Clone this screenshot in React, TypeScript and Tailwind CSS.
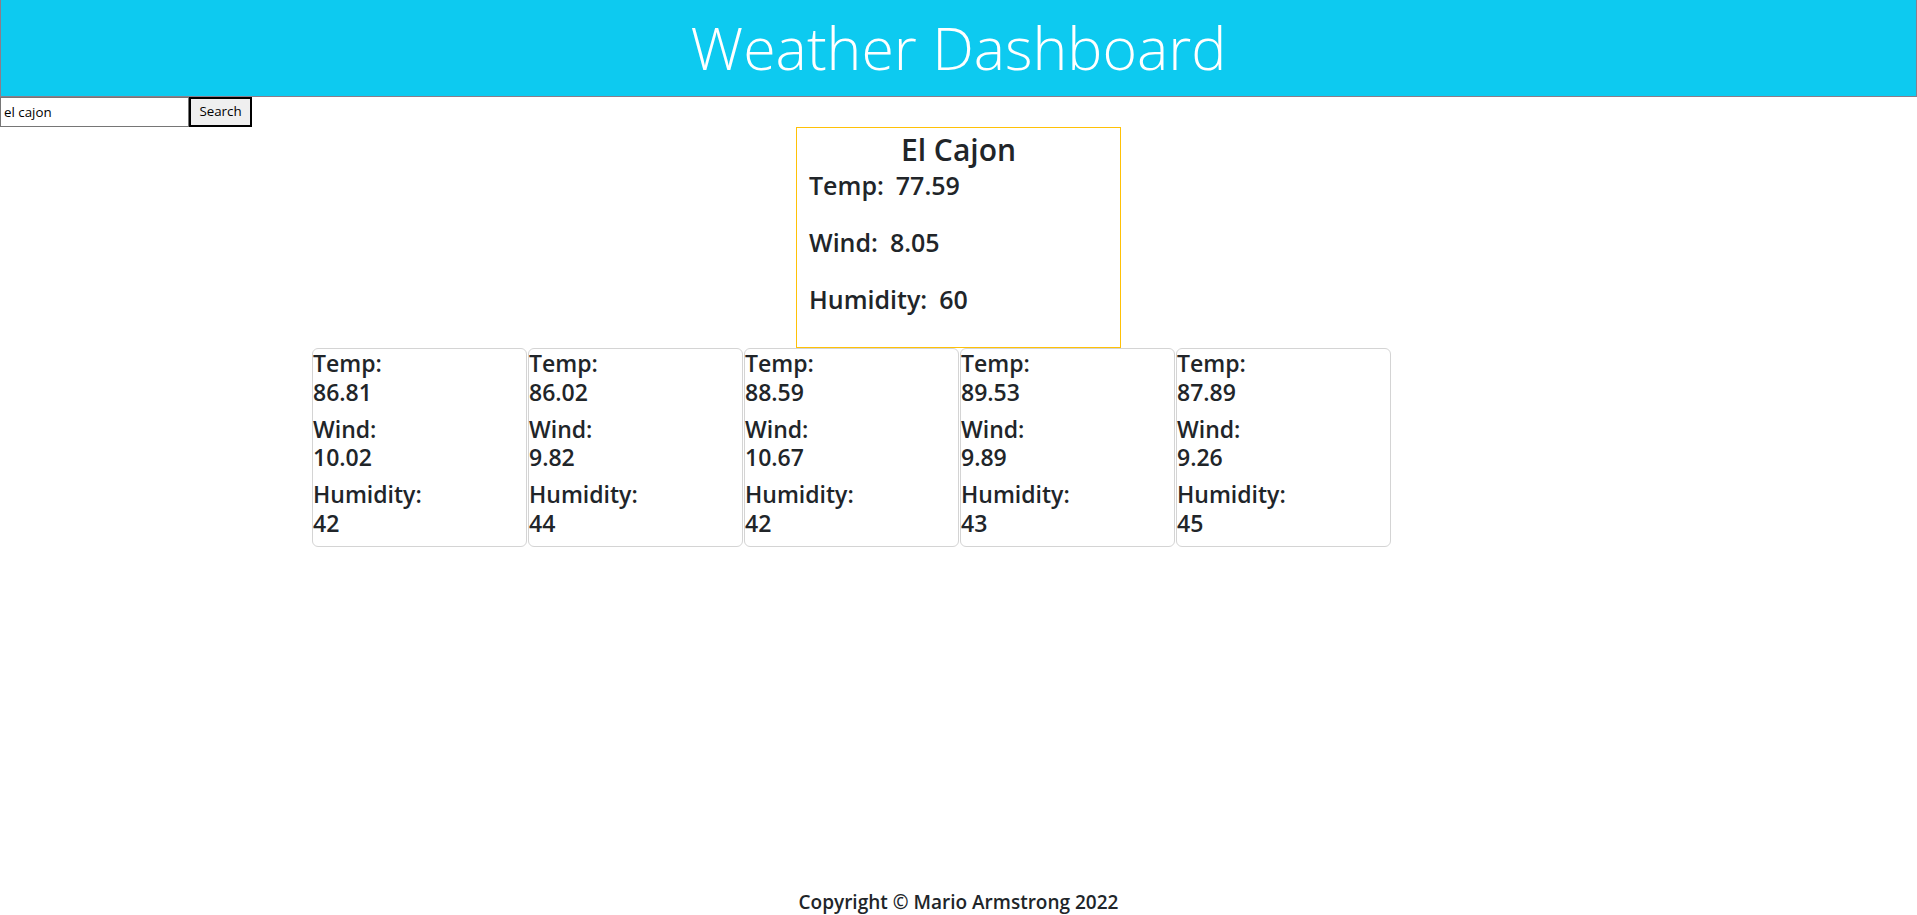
import { useState } from 'react'

const current = { city: 'El Cajon', temp: '77.59', wind: '8.05', humidity: '60' }

const forecast = [
  { temp: '86.81', wind: '10.02', humidity: '42' },
  { temp: '86.02', wind: '9.82', humidity: '44' },
  { temp: '88.59', wind: '10.67', humidity: '42' },
  { temp: '89.53', wind: '9.89', humidity: '43' },
  { temp: '87.89', wind: '9.26', humidity: '45' },
]

function ForecastCard({ day }: { day: { temp: string; wind: string; humidity: string } }) {
  return (
    <div className="w-[215px] border border-[#d4d4d4] rounded-[6px] text-[23px] leading-[28.8px] font-semibold">
      <div className="mb-2">
        <div>Temp:</div>
        <div>{day.temp}</div>
      </div>
      <div className="mb-2">
        <div>Wind:</div>
        <div>{day.wind}</div>
      </div>
      <div className="mb-2">
        <div>Humidity:</div>
        <div>{day.humidity}</div>
      </div>
    </div>
  )
}

export default function App() {
  const [city, setCity] = useState('el cajon')

  return (
    <div
      className="min-h-screen flex flex-col bg-white text-[#212529]"
      style={{ fontFamily: '"Open Sans", "Noto Sans", sans-serif' }}
    >
      <header className="h-[97px] bg-[#0dcaf0] border-l border-r border-b border-[#8b7d8b] flex items-center justify-center">
        <h1 className="text-white font-light text-[59px] leading-none pb-[2px]">Weather Dashboard</h1>
      </header>

      <div className="flex h-[30px]">
        <input
          value={city}
          onChange={e => setCity(e.target.value)}
          className="w-[189px] h-[30px] border border-[#767676] px-[3px] text-[13.33px] text-black outline-none"
        />
        <button className="w-[63px] h-[30px] border-2 border-black bg-[#efefef] text-[13.33px] text-black">
          Search
        </button>
      </div>

      <section className="mx-auto w-[325px] h-[221px] border border-[#ffc107] px-[12px] pt-[3px]">
        <h2 className="text-center text-[30px] leading-[38.4px] font-semibold">{current.city}</h2>
        <div className="text-[25px] leading-[33.6px] font-semibold">
          <div className="h-[57px] flex gap-[12px]">
            <span>Temp:</span>
            <span>{current.temp}</span>
          </div>
          <div className="h-[57px] flex gap-[12px]">
            <span>Wind:</span>
            <span>{current.wind}</span>
          </div>
          <div className="h-[57px] flex gap-[12px]">
            <span>Humidity:</span>
            <span>{current.humidity}</span>
          </div>
        </div>
      </section>

      <div className="flex gap-[1px] pl-[312px]">
        {forecast.map((d, i) => (
          <ForecastCard key={i} day={d} />
        ))}
      </div>

      <footer className="mt-auto pb-[1px] text-center text-[19px] leading-[24px] font-semibold">
        Copyright © Mario Armstrong 2022
      </footer>
    </div>
  )
}
